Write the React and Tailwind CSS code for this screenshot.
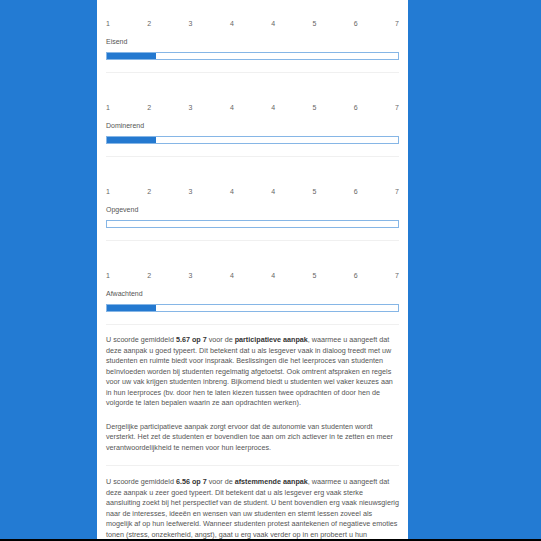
import React from 'react';

const scale = ['1', '2', '3', '4', '4', '5', '6', '7'];

const items = [
  { label: 'Eisend', value: 2 },
  { label: 'Dominerend', value: 2 },
  { label: 'Opgevend', value: 1 },
  { label: 'Afwachtend', value: 2 },
];

const ScaleItem = ({ label, value, first }) => {
  const pct = ((value - 1) / 6) * 100;
  return (
    <div className={`${first ? 'pt-[19px]' : 'pt-[30px]'} pb-[12px] border-b border-[#f0f0f0]`}>
      <div className="flex justify-between text-[7px] leading-[10px] text-[#666]">
        {scale.map((n, i) => (
          <span key={i}>{n}</span>
        ))}
      </div>
      <div className="mt-[8px] text-[7px] leading-[10px] text-[#555]">{label}</div>
      <div className="mt-[5px] h-[8px] border border-[#86b6e6] bg-white">
        <div className="h-full bg-[#2479d0]" style={{ width: `${pct}%` }} />
      </div>
    </div>
  );
};

export default function App() {
  return (
    <div
      className="h-[541px] flex flex-col bg-[#237bd3] overflow-hidden"
      style={{ fontFamily: '"Liberation Sans", Arial, sans-serif' }}
    >
      <div className="flex-1 flex justify-center overflow-hidden">
        <div className="w-[311px] bg-white px-[9px] ml-[-36px] shrink-0">
          {items.map((it, i) => (
            <ScaleItem key={it.label} {...it} first={i === 0} />
          ))}

          <div className="pt-[10px] pb-[12px] border-b border-[#f0f0f0] text-[7.2px] leading-[10.5px] text-[#555]">
            <p>
              U scoorde gemiddeld <b className="text-[#333]">5.67 op 7</b> voor de{' '}
              <b className="text-[#333]">participatieve aanpak</b>, waarmee u aangeeft dat deze aanpak u goed
              typeert. Dit betekent dat u als lesgever vaak in dialoog treedt met uw studenten en ruimte biedt
              voor inspraak. Beslissingen die het leerproces van studenten beïnvloeden worden bij studenten
              regelmatig afgetoetst. Ook omtrent afspraken en regels voor uw vak krijgen studenten inbreng.
              Bijkomend biedt u studenten wel vaker keuzes aan in hun leerproces (bv. door hen te laten kiezen
              tussen twee opdrachten of door hen de volgorde te laten bepalen waarin ze aan opdrachten werken).
            </p>
            <p className="mt-[13px]">
              Dergelijke participatieve aanpak zorgt ervoor dat de autonomie van studenten wordt versterkt. Het
              zet de studenten er bovendien toe aan om zich actiever in te zetten en meer verantwoordelijkheid te
              nemen voor hun leerproces.
            </p>
          </div>

          <div className="pt-[11px] pb-[12px] text-[7.2px] leading-[10.5px] text-[#555]">
            <p>
              U scoorde gemiddeld <b className="text-[#333]">6.56 op 7</b> voor de{' '}
              <b className="text-[#333]">afstemmende aanpak</b>, waarmee u aangeeft dat deze aanpak u zeer goed
              typeert. Dit betekent dat u als lesgever erg vaak sterke aansluiting zoekt bij het perspectief van
              de student. U bent bovendien erg vaak nieuwsgierig naar de interesses, ideeën en wensen van uw
              studenten en stemt lessen zoveel als mogelijk af op hun leefwereld. Wanneer studenten protest
              aantekenen of negatieve emoties tonen (stress, onzekerheid, angst), gaat u erg vaak verder op in en
              probeert u hun standpunt te begrijpen.
            </p>
          </div>
        </div>
      </div>
      <div className="h-[2px] bg-black shrink-0" />
    </div>
  );
}
